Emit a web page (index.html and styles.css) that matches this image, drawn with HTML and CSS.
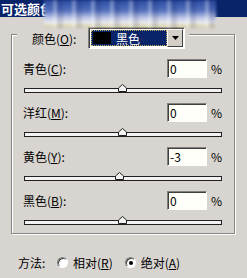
FILE: index.html
```html
<!doctype html>
<html>
  <head>
    <meta charset='utf-8'>
    <title>可选颜色</title>
    <link rel="stylesheet" href="styles.css">
  </head>
  <body>

    <div class="titlebar">可选颜色</div>
    <div class="smear"></div>

    <div class="group">
      <div class="head">
        <span class="head-label">颜色(<u>O</u>):</span>
        <div class="select">
          <div class="select-value"><span class="swatch"></span>黑色</div>
          <div class="select-btn">
            <svg width="7" height="4" viewBox="0 0 7 4"><path d="M0 0H7L3.5 4Z" fill="#000"/></svg>
          </div>
        </div>
      </div>

      <div class="rows">
        <div class="row">
          <div class="row-top">
            <span class="label">青色(<u>C</u>):</span>
            <span class="field">0</span>
            <span class="pct">%</span>
          </div>
          <div class="track">
            <svg class="thumb" style="left: 50%" width="9" height="8" viewBox="0 0 9 8"><path d="M0.5 7.5V4L4.5 0.5L8.5 4V7.5Z" fill="#f2f2f2" stroke="#202020"/></svg>
          </div>
        </div>

        <div class="row">
          <div class="row-top">
            <span class="label">洋红(<u>M</u>):</span>
            <span class="field">0</span>
            <span class="pct">%</span>
          </div>
          <div class="track">
            <svg class="thumb" style="left: 50%" width="9" height="8" viewBox="0 0 9 8"><path d="M0.5 7.5V4L4.5 0.5L8.5 4V7.5Z" fill="#f2f2f2" stroke="#202020"/></svg>
          </div>
        </div>

        <div class="row">
          <div class="row-top">
            <span class="label">黄色(<u>Y</u>):</span>
            <span class="field">-3</span>
            <span class="pct">%</span>
          </div>
          <div class="track">
            <svg class="thumb" style="left: 48.5%" width="9" height="8" viewBox="0 0 9 8"><path d="M0.5 7.5V4L4.5 0.5L8.5 4V7.5Z" fill="#f2f2f2" stroke="#202020"/></svg>
          </div>
        </div>

        <div class="row">
          <div class="row-top">
            <span class="label">黑色(<u>B</u>):</span>
            <span class="field">0</span>
            <span class="pct">%</span>
          </div>
          <div class="track">
            <svg class="thumb" style="left: 50%" width="9" height="8" viewBox="0 0 9 8"><path d="M0.5 7.5V4L4.5 0.5L8.5 4V7.5Z" fill="#f2f2f2" stroke="#202020"/></svg>
          </div>
        </div>
      </div>
    </div>

    <div class="method">
      <span class="method-label">方法:</span>
      <span class="opt"><span class="radio"></span><span>相对(<u>R</u>)</span></span>
      <span class="opt"><span class="radio checked"></span><span>绝对(<u>A</u>)</span></span>
    </div>

  </body>
</html>
```

FILE: styles.css
```css
body {
  margin: 0;
  width: 247px;
  height: 278px;
  overflow: hidden;
  position: relative;
  background: #d8d5d0;
  font-family: "Noto Sans CJK SC", sans-serif;
  font-size: 12px;
  color: #000;
}

u {
  text-underline-offset: 1px;
}

.titlebar {
  height: 17px;
  padding-left: 1px;
  background: #0a246a;
  color: #fff;
  font-size: 13px;
  font-weight: bold;
  line-height: 17px;
}

/* the blurred band over the title */
.smear {
  position: absolute;
  left: 44px;
  top: 0;
  width: 172px;
  height: 28px;
  background:
    repeating-linear-gradient(90deg, rgba(255,255,255,0) 0 9px, rgba(255,255,255,.3) 9px 13px, rgba(0,0,60,.12) 13px 19px),
    linear-gradient(#2a4aa0 0, #5270bc 38%, #b8c2e4 62%, #eceef2 82%, #d8d0a0 93%, rgba(216,213,208,0) 100%);
  filter: blur(1.5px);
}

.group {
  width: 224px;
  margin: 17px 0 0 11px;
  border: 1px solid #868686;
  box-sizing: border-box;
  box-shadow: inset 1px 1px 0 #fff, 1px 1px 0 #fff;
}

.head {
  display: flex;
  align-items: center;
  width: fit-content;
  margin: -8px 0 0 5px;
  padding: 0 4px 0 15px;
  background: #d8d5d0;
}
.head-label {
  width: 56px;
}

.select {
  display: flex;
  width: 97px;
  height: 22px;
  box-sizing: border-box;
  padding: 1px;
  border: 1px solid;
  border-color: #808080 #fff #fff #808080;
  box-shadow: inset 1px 1px 0 #404040;
  background: #fff;
}
.select-value {
  flex: 1;
  display: flex;
  align-items: center;
  margin: 1px 0 1px 1px;
  border: 1px dotted #c8b060;
  background: #0a246a;
  color: #fff;
}
.swatch {
  width: 18px;
  height: 12px;
  margin: 0 5px 0 1px;
  background: #000;
}
.select-btn {
  display: flex;
  align-items: center;
  justify-content: center;
  width: 16px;
  box-sizing: border-box;
  border: 1px solid;
  border-color: #fff #404040 #404040 #fff;
  background: #d4d0c8;
}

.rows {
  display: flex;
  flex-direction: column;
  gap: 10px;
  padding: 10px 12px 8px 11px;
}
.row-top {
  display: flex;
  align-items: center;
  height: 19px;
}
.label {
  flex: 1;
}
.field {
  width: 40px;
  height: 19px;
  box-sizing: border-box;
  padding-left: 2px;
  border: 1px solid;
  border-color: #808080 #fff #fff #808080;
  box-shadow: inset 1px 1px 0 #404040;
  background: #fffffa;
  line-height: 17px;
}
.pct {
  width: 11px;
  margin-left: 4px;
  text-align: right;
}

.track {
  position: relative;
  height: 5px;
  margin: 10px 0 0 1px;
  box-sizing: border-box;
  border: 1px solid #202020;
  background: #f2f2f2;
}
.thumb {
  position: absolute;
  top: -5px;
  margin-left: -5px;
}

.method {
  display: flex;
  align-items: center;
  height: 14px;
  margin: 21px 0 0 18px;
}
.method-label {
  width: 39px;
}
.opt {
  display: flex;
  align-items: center;
  gap: 5px;
  margin-right: 12px;
}
.radio {
  position: relative;
  width: 11px;
  height: 11px;
  box-sizing: border-box;
  border: 1px solid;
  border-color: #808080 #fff #fff #808080;
  border-radius: 50%;
  box-shadow: inset 1px 1px 0 #404040;
  background: #fff;
}
.radio.checked:after {
  content: "";
  position: absolute;
  left: 3px;
  top: 3px;
  width: 4px;
  height: 4px;
  border-radius: 50%;
  background: #000;
}
```
